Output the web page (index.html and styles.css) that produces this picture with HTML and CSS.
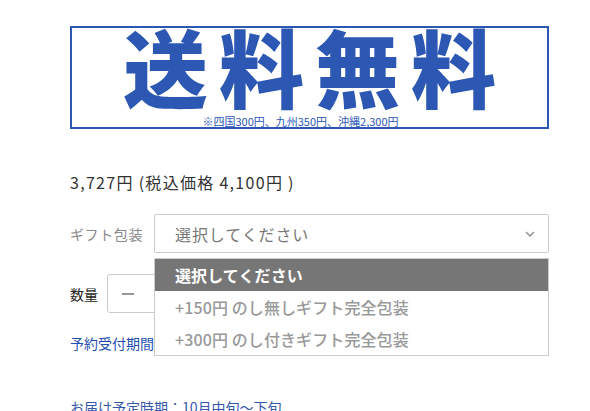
FILE: index.html
```
<!DOCTYPE html>
<html lang="ja">
<head>
    <meta charset="UTF-8">
    <meta name="viewport" content="width=device-width, initial-scale=1.0">
    <title>商品詳細</title>
    <link rel="stylesheet" href="styles.css">
</head>
<body>

<div class="product-box">
    <div class="free-shipping">
        <div class="free-title">送料無料</div>
        <div class="free-note">※四国300円、九州350円、沖縄2,300円</div>
    </div>

    <p class="price">3,727円 (税込価格 4,100円 )</p>

    <div class="form-row gift-row">
        <span class="row-label gift-label">ギフト包装</span>
        <div class="select-wrap">
            <div class="select-box">
                <span>選択してください</span>
                <svg class="chevron" width="10" height="6" viewBox="0 0 10 6">
                    <polyline points="1,1 5,5 9,1" fill="none" stroke="#8a8a8a" stroke-width="1.3"/>
                </svg>
            </div>
            <ul class="select-list">
                <li class="selected">選択してください</li>
                <li>+150円 のし無しギフト完全包装</li>
                <li>+300円 のし付きギフト完全包装</li>
            </ul>
        </div>
    </div>

    <div class="form-row qty-row">
        <span class="row-label qty-label">数量</span>
        <div class="qty-box">
            <button class="qty-btn"><span class="minus"></span></button>
            <span class="qty-value">1</span>
            <button class="qty-btn">+</button>
        </div>
    </div>

    <p class="info-link">予約受付期間：9月1日〜10月10日</p>
    <p class="info-link delivery">お届け予定時期：10月中旬〜下旬</p>
</div>

</body>
</html>
```

FILE: styles.css
```
body {
    margin: 0;
    font-family: "Noto Sans CJK JP", "Noto Sans", sans-serif;
    background-color: #fff;
    color: #333;
}
.product-box {
    width: 479px;
    padding: 26px 0 0 70px;
}
.free-shipping {
    height: 103px;
    box-sizing: border-box;
    border: 2px solid #2c58b4;
    color: #2c58b4;
    text-align: center;
}
.free-title {
    font-size: 85px;
    font-weight: 900;
    line-height: 74px;
    letter-spacing: 11px;
    padding-left: 11px;
}
.free-note {
    font-size: 11px;
    line-height: 12px;
    margin-top: 13px;
    margin-right: 18px;
}
.price {
    margin: 41px 0 0;
    font-size: 16px;
    line-height: 24px;
    letter-spacing: 1.3px;
    color: #333;
}
.form-row {
    display: flex;
    align-items: center;
}
.row-label {
    font-size: 14px;
    flex-shrink: 0;
}
.gift-row {
    margin-top: 20px;
}
.gift-label {
    width: 84px;
    color: #888;
    letter-spacing: 0.6px;
}
.select-wrap {
    position: relative;
    flex: 1;
}
.select-box {
    height: 39px;
    box-sizing: border-box;
    border: 1px solid #ccc;
    border-radius: 2px;
    display: flex;
    align-items: center;
    justify-content: space-between;
    padding: 0 13px 0 20px;
    font-size: 16px;
    color: #777;
    letter-spacing: 0.9px;
}
.chevron {
    margin-top: 1px;
}
.select-list {
    position: absolute;
    top: 44px;
    left: 0;
    right: 0;
    z-index: 2;
    margin: 0;
    padding: 0;
    list-style: none;
    background-color: #fff;
    border: 1px solid #ccc;
}
.select-list li {
    height: 32px;
    line-height: 32px;
    padding-left: 20px;
    font-size: 16px;
    font-weight: 500;
    color: #999;
    letter-spacing: 0.1px;
}
.select-list li.selected {
    background-color: #767676;
    color: #fff;
    font-weight: 700;
}
.qty-row {
    margin-top: 21px;
}
.qty-label {
    width: 37px;
    color: #222;
}
.qty-box {
    display: flex;
    align-items: center;
    height: 39px;
    box-sizing: border-box;
    border: 1px solid #ccc;
    border-radius: 3px;
}
.qty-btn {
    width: 40px;
    height: 100%;
    border: none;
    background: none;
    font-size: 18px;
    color: #999;
    padding: 0;
    display: flex;
    align-items: center;
    justify-content: center;
}
.minus {
    width: 12px;
    height: 2px;
    background-color: #999;
}
.qty-value {
    width: 60px;
    text-align: center;
    font-size: 16px;
}
.info-link {
    margin: 20px 0 0;
    font-size: 14px;
    line-height: 20px;
    color: #1d4fb3;
}
.info-link.delivery {
    margin-top: 44px;
    color: #3558ab;
}
```
